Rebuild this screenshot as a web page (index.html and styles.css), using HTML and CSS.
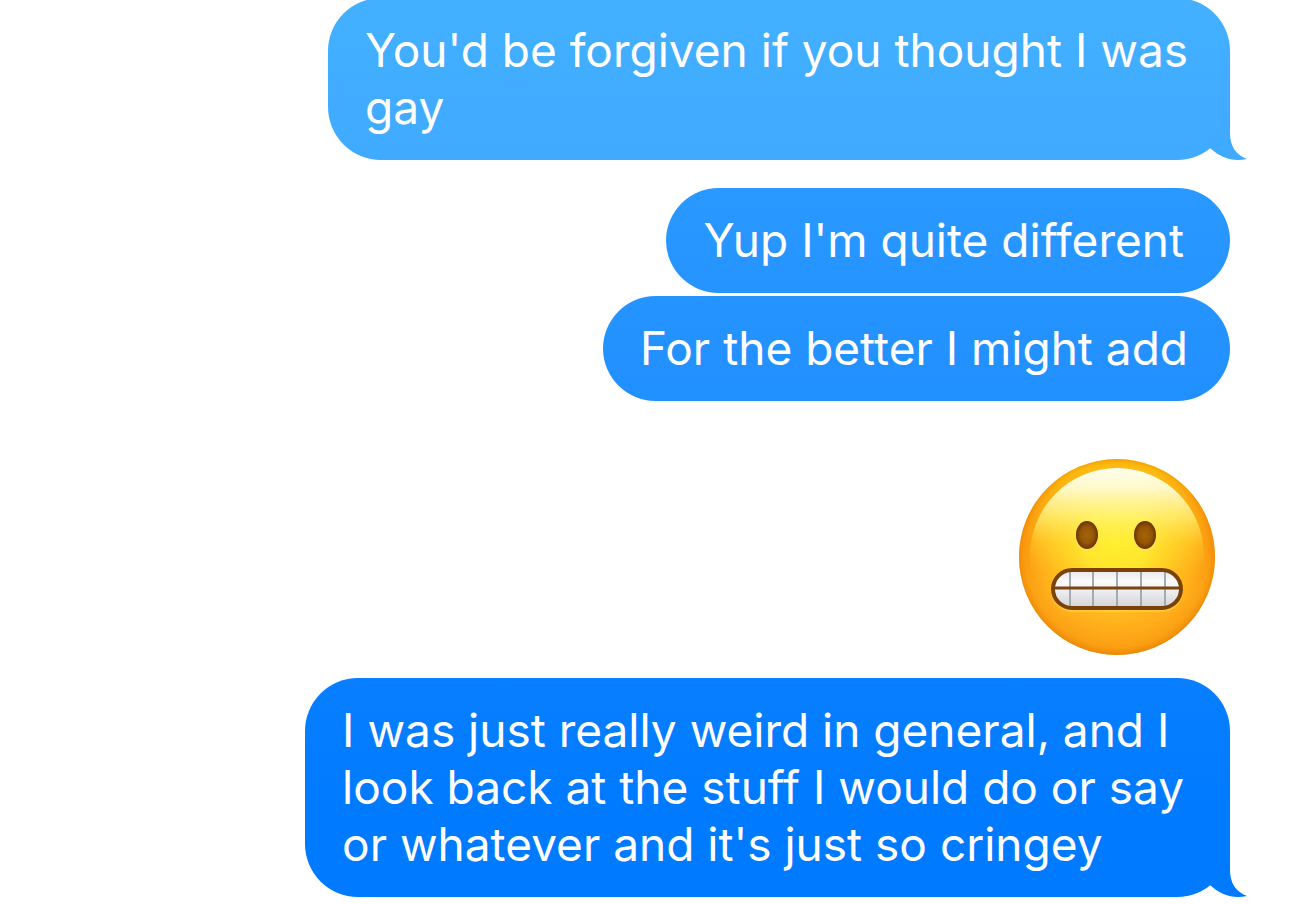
FILE: index.html
```html
<!DOCTYPE html>
<html lang="en">
<head>
<meta charset="utf-8">
<meta name="viewport" content="width=device-width, initial-scale=1">
<title>Messages</title>
<link rel="stylesheet" href="styles.css">
</head>
<body>
<main class="thread">
  <p class="bubble bubble-light">You'd be forgiven if you thought I was<br>gay
    <svg class="tail" viewBox="0 0 38 54" aria-hidden="true"><path d="M21 0V27C21 40 27 49 38 53C24 56 12 52 1 42Z"/></svg>
  </p>
  <div class="group">
    <p class="bubble bubble-upper bubble-roomy">Yup I'm quite different</p>
    <p class="bubble bubble-lower">For the better I might add</p>
  </div>
  <svg class="emoji" viewBox="0 0 200 200" role="img" aria-label="Grimacing face">
    <defs>
      <linearGradient id="base" x1="0" y1="0" x2="0" y2="1">
        <stop offset="0" stop-color="#ffc20c"/><stop offset=".06" stop-color="#ffd010"/><stop offset=".22" stop-color="#ffb010"/><stop offset=".42" stop-color="#ffa010"/><stop offset=".7" stop-color="#ffae1c"/><stop offset="1" stop-color="#ffa818"/>
      </linearGradient>
      <radialGradient id="rim" cx=".5" cy=".49" r=".52">
        <stop offset=".76" stop-color="#f08c08" stop-opacity="0"/><stop offset=".9" stop-color="#f28a08" stop-opacity=".3"/><stop offset="1" stop-color="#dd7600" stop-opacity=".8"/>
      </radialGradient>
      <radialGradient id="glow" cx=".5" cy=".42" r=".5">
        <stop offset="0" stop-color="#fff02c"/><stop offset=".35" stop-color="#ffe52c"/><stop offset=".7" stop-color="#ffcc24" stop-opacity=".7"/><stop offset="1" stop-color="#ffb81c" stop-opacity="0"/>
      </radialGradient>
      <linearGradient id="shine" x1="0" y1="0" x2="0" y2="1">
        <stop offset="0" stop-color="#fffef0"/><stop offset=".12" stop-color="#fffbcf" stop-opacity=".95"/><stop offset=".28" stop-color="#fff77e" stop-opacity=".7"/><stop offset=".44" stop-color="#ffeb3c" stop-opacity=".25"/><stop offset=".58" stop-color="#ffe030" stop-opacity="0"/>
      </linearGradient>
      <linearGradient id="teeth" x1="0" y1="0" x2="0" y2="1">
        <stop offset="0" stop-color="#e6e6ea"/><stop offset=".3" stop-color="#fbfbfc"/><stop offset=".55" stop-color="#eeeef0"/><stop offset="1" stop-color="#d2d2d8"/>
      </linearGradient>
      <radialGradient id="eye">
        <stop offset="0" stop-color="#a4640a"/><stop offset=".6" stop-color="#955605"/><stop offset="1" stop-color="#6b3300"/>
      </radialGradient>
    </defs>
    <circle cx="100" cy="100" r="98" fill="url(#base)"/>
    <circle cx="100" cy="100" r="93" fill="url(#glow)"/>
    <circle cx="100" cy="100" r="98" fill="url(#rim)"/>
    <ellipse cx="100" cy="99" rx="87" ry="88" fill="url(#shine)"/>
    <ellipse cx="70" cy="79" rx="12" ry="15" fill="#ffe65c" opacity=".6"/>
    <ellipse cx="128" cy="79" rx="12" ry="15" fill="#ffe65c" opacity=".6"/>
    <ellipse cx="70" cy="78" rx="11" ry="14" fill="url(#eye)"/>
    <ellipse cx="128" cy="78" rx="11" ry="14" fill="url(#eye)"/>
    <rect x="36" y="114" width="128" height="39" rx="19" fill="none" stroke="#ffd04a" stroke-width="4" opacity=".6"/>
    <rect x="36" y="113" width="128" height="38" rx="19" fill="url(#teeth)"/>
    <path d="M53 115V149M76 115V149M100 115V149M124 115V149M148 115V149" stroke="#a2abb2" stroke-width="2"/>
    <path d="M37 131H163" stroke="#7d450e" stroke-width="3"/>
    <rect x="36" y="113" width="128" height="38" rx="19" fill="none" stroke="#7b4206" stroke-width="4"/>
  </svg>
  <p class="bubble bubble-deep bubble-roomy">I was just really weird in general, and I<br>look back at the stuff I would do or say<br>or whatever and it's just so cringey
    <svg class="tail" viewBox="0 0 38 54" aria-hidden="true"><path d="M21 0V27C21 40 27 49 38 53C24 56 12 52 1 42Z"/></svg>
  </p>
</main>
</body>
</html>
```
FILE: styles.css
```css
* { box-sizing: border-box; }
body { margin: 0; background: #fff; color: #fff; font: 46px/57px Inter, "Liberation Sans", sans-serif; font-variant-ligatures: none; overflow-x: hidden; }
.thread { display: flex; flex-direction: column; align-items: flex-end; padding: 0 60px 7px 0; }
.bubble { position: relative; margin: 0; padding: 24px 42px 24px 37px; border-radius: 53px; white-space: nowrap; }
.bubble-roomy { padding-right: 46px; }
.bubble-light { margin-top: -2px; background: linear-gradient(#43b0ff, #40aaff); }
.group { display: flex; flex-direction: column; align-items: flex-end; gap: 3px; margin-top: 28px; }
.bubble-upper { background: linear-gradient(#2998ff, #2694ff); }
.bubble-lower { background: linear-gradient(#2594ff, #2190ff); }
.bubble-deep { background: linear-gradient(#087fff, #007aff 60%); }
.emoji { width: 200px; height: 200px; margin: 56px 13px 21px 0; }
.tail { position: absolute; right: -17px; bottom: 0; width: 38px; height: 54px; fill: #40aaff; }
.bubble-deep .tail { fill: #007aff; }
```
